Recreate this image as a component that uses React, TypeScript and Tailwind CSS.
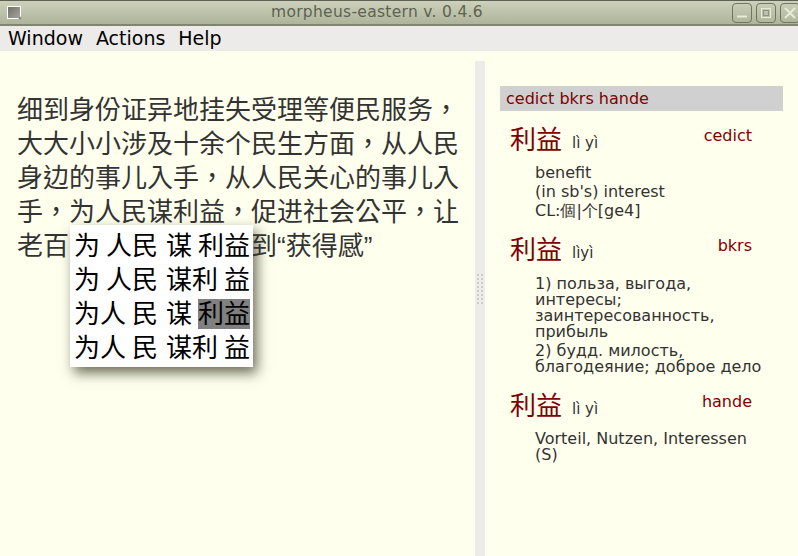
import React from 'react';

const cjk = "font-['Liberation_Sans','Noto_Sans_CJK_TC',sans-serif]";
const dejavu = "font-['DejaVu_Sans',sans-serif]";

const lines = [
  '细到身份证异地挂失受理等便民服务，',
  '大大小小涉及十余个民生方面，从人民',
  '身边的事儿入手，从人民关心的事儿入',
  '手，为人民谋利益，促进社会公平，让',
];

// word + the width of its slot, spaces between words are part of the slot
const popupRows = [
  [['为', 'w-[32px]'], ['人民', 'w-[60px]'], ['谋', 'w-[32px]'], ['利益', 'w-[52px]']],
  [['为', 'w-[32px]'], ['人民', 'w-[60px]'], ['谋利', 'w-[58px]'], ['益', 'w-[26px]']],
  [['为人', 'w-[58px]'], ['民', 'w-[34px]'], ['谋', 'w-[32px]'], ['利益', 'w-[52px]']],
  [['为人', 'w-[58px]'], ['民', 'w-[34px]'], ['谋利', 'w-[58px]'], ['益', 'w-[26px]']],
];

const WinButton = ({ children }: { children: React.ReactNode }) => (
  <div className="w-5 h-5 shrink-0 rounded-[4px] border border-[#70765f] flex items-center justify-center">
    <svg width="14" height="14" viewBox="0 0 14 14" fill="none" stroke="#e8ebd8">
      {children}
    </svg>
  </div>
);

const EntryHead = ({ pinyin, dict }: { pinyin: string; dict: string }) => (
  <div className="h-[36px] flex items-center text-[#800000]">
    <span className={`${cjk} text-[26px] leading-[36px] mt-[2px]`}>利益</span>
    <span className="ml-[10px] text-[15px] text-[#333333] mt-[9px]">{pinyin}</span>
    <span className="ml-auto mr-[31px] text-[16px] -mt-[7px]">{dict}</span>
  </div>
);

export default function App() {
  return (
    <div className={`w-[798px] h-[556px] overflow-hidden flex flex-col bg-[#ecebea] ${dejavu}`}>
      {/* Title bar */}
      <div className="relative h-[26px] shrink-0 flex items-center justify-between pl-[7px] border-t border-[#5c6152] border-b-2 border-b-[#80856f] bg-gradient-to-b from-[#cdd1bb] to-[#aeb39b]">
        <svg width="15" height="14" viewBox="0 0 15 14" className="mt-[1px]">
          <defs>
            <linearGradient id="appIcon" x1="0" y1="0" x2="1" y2="1">
              <stop offset="0" stopColor="#6e6e68" />
              <stop offset="1" stopColor="#a8a89e" />
            </linearGradient>
          </defs>
          <rect x="0.5" y="0.5" width="13" height="12" fill="url(#appIcon)" stroke="#ffffff" />
          <circle cx="13" cy="12" r="1.5" fill="#8e8e84" />
        </svg>
        <div className="absolute left-0 w-[754px] top-0 h-[24px] flex items-center justify-center text-[15.5px] tracking-[0.3px] text-[#5d6351]">
          morpheus-eastern v. 0.4.6
        </div>
        <div className="flex gap-1 -mr-[2px] relative">
          <WinButton><path d="M2 10.5h10" strokeWidth="2" /></WinButton>
          <WinButton>
            <rect x="2.5" y="2.5" width="9" height="9" strokeWidth="1" />
            <rect x="4.5" y="4.5" width="5" height="5" strokeWidth="1" stroke="#8f9580" />
          </WinButton>
          <WinButton><path d="M2 2l10 10M12 2L2 12" strokeWidth="2" /></WinButton>
        </div>
      </div>

      {/* Menu bar */}
      <div className="h-[25px] shrink-0 flex items-center gap-[13px] pl-2 text-[19px] text-black">
        <span>Window</span>
        <span>Actions</span>
        <span>Help</span>
      </div>

      {/* Panes */}
      <div className="flex-1 flex pl-[2px] bg-[#ffffee]">
        <div className="relative w-[473px] pt-[42px] pl-[15px]">
          <div className={`${cjk} text-[26px] leading-[34px] text-[#333333] whitespace-nowrap`}>
            {lines.map((l) => (
              <div key={l}>{l}</div>
            ))}
            <div className="flex">
              <span>老百</span>
              <span className="w-[182px]" />
              <span>到“获得感”</span>
            </div>
          </div>

          {/* Segmentation popup */}
          <div className={`absolute left-[68px] top-[174px] w-[183px] h-[142px] bg-white pt-[6px] shadow-[4px_6px_12px_rgba(60,60,40,0.75)] ${cjk}`}>
            {popupRows.map((row, i) => (
              <div key={i} className="flex h-[34px] pl-[4px] text-[26px] leading-[30px] text-black">
                {row.map(([seg, w], j) => (
                  <span key={j} className={`${w} h-[30px] whitespace-nowrap ${i === 2 && j === 3 ? 'bg-[#808080]' : ''}`}>
                    {seg}
                  </span>
                ))}
              </div>
            ))}
          </div>
        </div>

        {/* Splitter */}
        <div className="w-[10px] mt-[10px] bg-[#ececec] flex flex-col items-center justify-center shrink-0">
          <div className="grid grid-cols-2 gap-[2px] mb-[40px]">
            {Array.from({ length: 16 }).map((_, i) => (
              <span key={i} className="w-[2px] h-[2px] bg-[#cccccc]" />
            ))}
          </div>
        </div>

        {/* Dictionary pane */}
        <div className="flex-1 pt-[35px] px-[15px]">
          <div className="h-[25px] bg-[#d0d0d0] pl-[6px] text-[16px] leading-[25px] text-[#800000]">cedict bkrs hande</div>
          <div className="pt-[10px] pl-[10px] text-[16px] text-[#333333]">
            <EntryHead pinyin="lì yì" dict="cedict" />
            <div className="pl-[25px] mt-[6px] leading-[19px] mb-[11px]">
              <div>benefit</div>
              <div>(in sb's) interest</div>
              <div>CL:個|个[ge4]</div>
            </div>

            <EntryHead pinyin="lìyì" dict="bkrs" />
            <div className="pl-[25px] mt-[9px] leading-[16px] mb-[12px]">
              <div>1) польза, выгода,</div>
              <div>интересы;</div>
              <div>заинтересованность,</div>
              <div className="mb-[3px]">прибыль</div>
              <div>2) будд. милость,</div>
              <div>благодеяние; доброе дело</div>
            </div>

            <EntryHead pinyin="lì yì" dict="hande" />
            <div className="pl-[25px] mt-[8px] leading-[16px]">
              <div>Vorteil, Nutzen, Interessen</div>
              <div>(S)</div>
            </div>
          </div>
        </div>
      </div>
    </div>
  );
}
